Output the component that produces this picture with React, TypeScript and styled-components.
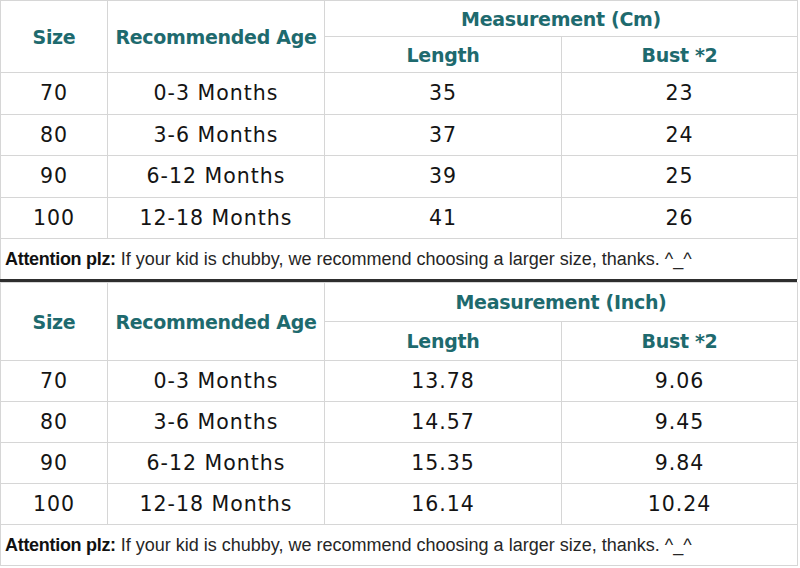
import React from "react";
import styled, { createGlobalStyle } from "styled-components";

interface SizeRow {
  size: string;
  age: string;
  length: string;
  bust: string;
}

interface TableProps {
  unit: string;
  rows: SizeRow[];
  headHeight: number;
  rowHeight: number;
}

const GlobalStyle = createGlobalStyle`
  html, body {
    margin: 0;
    padding: 0;
    background: #ffffff;
  }
`;

const Page = styled.div`
  width: 797px;
`;

const Table = styled.table`
  width: 797px;
  border-collapse: collapse;
  table-layout: fixed;
  font-family: "DejaVu Sans", "Open Sans", sans-serif;
`;

const Col = styled.col<{ $w: number }>`
  width: ${(p) => p.$w}px;
`;

const Row = styled.tr<{ $h: number }>`
  height: ${(p) => p.$h}px;
`;

const Divider = styled.div`
  height: 3px;
  background: #2e2e2e;
  margin-top: -1px;
`;

const HeadCell = styled.th`
  border: 1px solid #d6d6d6;
  color: #1e6a6e;
  font-weight: 700;
  font-size: 19px;
  letter-spacing: -0.3px;
  text-align: center;
  vertical-align: middle;
  padding: 0;
`;

const DataCell = styled.td`
  border: 1px solid #d6d6d6;
  color: #141414;
  font-size: 20.5px;
  letter-spacing: 1px;
  text-align: center;
  vertical-align: middle;
  padding: 0;
`;

const NoteCell = styled.td`
  border: 1px solid #d6d6d6;
  font-family: "Liberation Sans", Arial, sans-serif;
  font-size: 18px;
  letter-spacing: 0;
  color: #262626;
  padding: 0 0 0 4px;
  text-align: left;
  vertical-align: middle;
  white-space: nowrap;
`;

const NoteLabel = styled.b`
  color: #111;
  letter-spacing: -0.3px;
`;

const cmRows: SizeRow[] = [
  { size: "70", age: "0-3 Months", length: "35", bust: "23" },
  { size: "80", age: "3-6 Months", length: "37", bust: "24" },
  { size: "90", age: "6-12 Months", length: "39", bust: "25" },
  { size: "100", age: "12-18 Months", length: "41", bust: "26" },
];

const inchRows: SizeRow[] = [
  { size: "70", age: "0-3 Months", length: "13.78", bust: "9.06" },
  { size: "80", age: "3-6 Months", length: "14.57", bust: "9.45" },
  { size: "90", age: "6-12 Months", length: "15.35", bust: "9.84" },
  { size: "100", age: "12-18 Months", length: "16.14", bust: "10.24" },
];

const SizeTable = ({ unit, rows, headHeight, rowHeight }: TableProps) => (
  <Table>
    <colgroup>
      <Col $w={107} />
      <Col $w={217} />
      <Col $w={237} />
      <Col $w={236} />
    </colgroup>
    <thead>
      <Row $h={headHeight}>
        <HeadCell rowSpan={2}>Size</HeadCell>
        <HeadCell rowSpan={2}>Recommended Age</HeadCell>
        <HeadCell colSpan={2}>Measurement ({unit})</HeadCell>
      </Row>
      <Row $h={headHeight}>
        <HeadCell>Length</HeadCell>
        <HeadCell>Bust *2</HeadCell>
      </Row>
    </thead>
    <tbody>
      {rows.map((r) => (
        <Row key={r.size} $h={rowHeight}>
          <DataCell>{r.size}</DataCell>
          <DataCell>{r.age}</DataCell>
          <DataCell>{r.length}</DataCell>
          <DataCell>{r.bust}</DataCell>
        </Row>
      ))}
      <Row $h={41}>
        <NoteCell colSpan={4}>
          <NoteLabel>Attention plz:</NoteLabel> If your kid is chubby, we
          recommend choosing a larger size, thanks. ^_^
        </NoteCell>
      </Row>
    </tbody>
  </Table>
);

const App = () => (
  <Page>
    <GlobalStyle />
    <SizeTable unit="Cm" rows={cmRows} headHeight={36} rowHeight={41.5} />
    <Divider />
    <SizeTable unit="Inch" rows={inchRows} headHeight={39} rowHeight={41} />
  </Page>
);

export default App;
